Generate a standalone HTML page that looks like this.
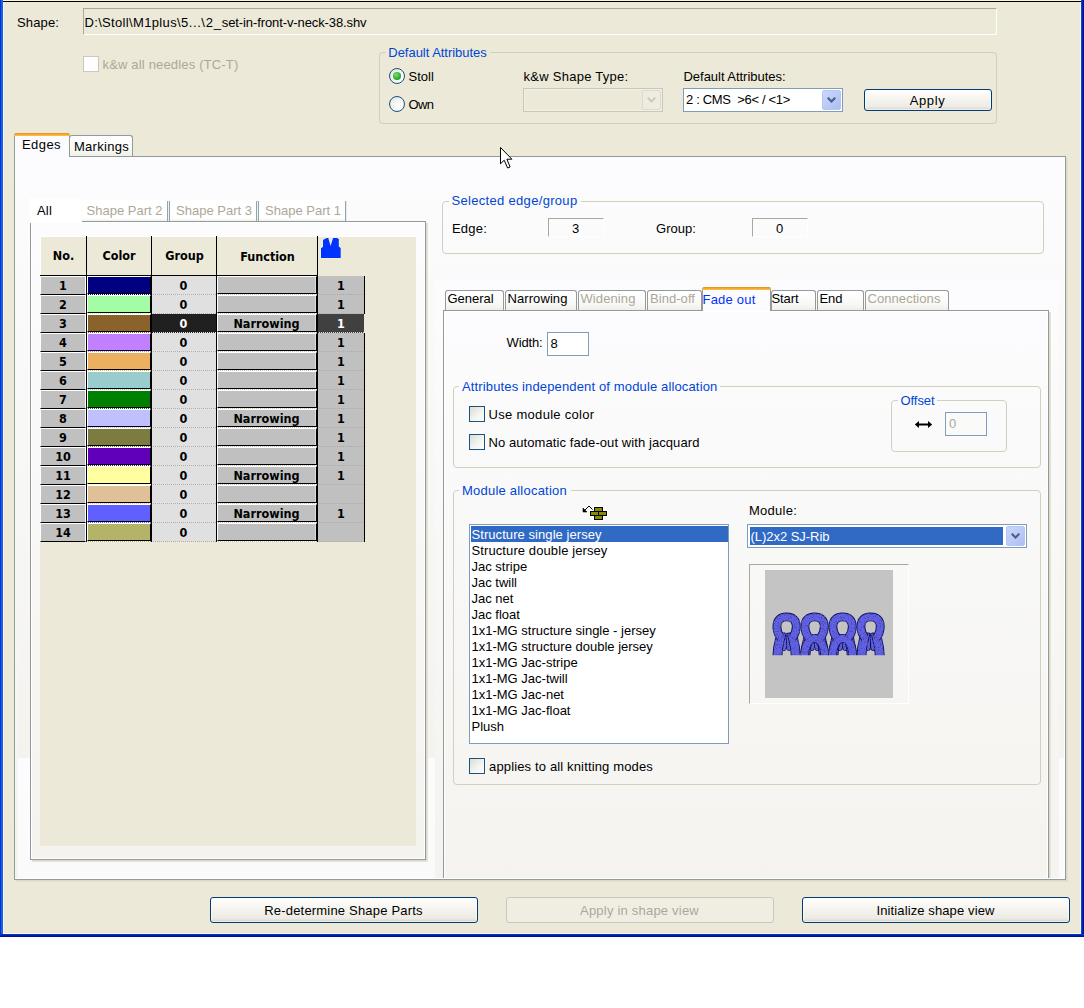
<!DOCTYPE html>
<html><head><meta charset="utf-8"><title>Shape Edges</title>
<style>
html,body{margin:0;padding:0;background:#fff}
body{width:1084px;height:1008px;position:relative;overflow:hidden;font:13px/15px "Liberation Sans",sans-serif;color:#000}
#w div,#w span,#w svg{position:absolute;box-sizing:border-box}
#w span span{position:static}
#w{position:absolute;left:0;top:0;width:1084px;height:937px;background:#ECE9D8;overflow:hidden}
.t{white-space:pre;font:13px/15px "Liberation Sans",sans-serif}
.b{white-space:pre;font:bold 12.5px/15px "DejaVu Sans Condensed","DejaVu Sans",sans-serif;text-align:center}
.gb{border:1px solid #D0D0BF;border-radius:4px}
.btn{border:1px solid #003C74;border-radius:3px;background:linear-gradient(#FFFFFF 0%,#F5F4EE 45%,#ECEBE5 85%,#D6D0C5 100%);box-shadow:inset 0 0 0 1px rgba(255,255,255,.6)}
.tab{border:1px solid #919B9C;border-bottom:none;border-radius:3px 3px 0 0;background:linear-gradient(#FFFFFF,#FAFAF9 55%,#F0F0EA 100%)}
.cb{border:1px solid #1C5180;background:linear-gradient(135deg,#DCDCD7 0%,#F3F3EF 55%,#FFFFFF 100%)}
.rd{border:1px solid #1C5180;border-radius:50%;background:radial-gradient(circle at 65% 65%,#FFFFFF 0%,#F3F3EF 50%,#DCDCD7 100%)}
.grad{background-image:linear-gradient(to bottom,#FCFCFE,#F4F3EE);background-size:100% 599px;background-repeat:repeat-y}
</style></head><body><div id="w">
<div style="left:0px;top:0px;width:1084px;height:1px;background:#FBF5DC"></div>
<div style="left:3px;top:1px;width:1078px;height:1px;background:#000"></div>
<div style="left:0px;top:0px;width:1px;height:937px;background:#0831D9"></div>
<div style="left:1px;top:0px;width:2px;height:937px;background:#1560EA"></div>
<div style="left:3px;top:2px;width:1px;height:932px;background:#FFF8DC"></div>
<div style="left:1080px;top:2px;width:1px;height:932px;background:#FFF8DC"></div>
<div style="left:1081px;top:0px;width:1px;height:937px;background:#0A3FE0"></div>
<div style="left:1082px;top:0px;width:1px;height:937px;background:#0024B8"></div>
<div style="left:1083px;top:0px;width:1px;height:937px;background:#00138C"></div>
<div style="left:3px;top:933px;width:1078px;height:1px;background:#FFF8DC"></div>
<div style="left:0px;top:934px;width:1084px;height:1px;background:#0831D9"></div>
<div style="left:0px;top:935px;width:1084px;height:1px;background:#001EA0"></div>
<div style="left:0px;top:936px;width:1084px;height:1px;background:#00138C"></div>
<span class="t" style="left:17px;top:15px;letter-spacing:0.130px;">Shape:</span>
<div style="left:83px;top:8px;width:914px;height:27px;border:1px solid #ACA899;border-right-color:#fff;border-bottom-color:#fff"></div>
<span class="t" style="left:84.5px;top:15px;"><span style="letter-spacing:0.332px">D:\Stoll\</span><span style="letter-spacing:0.353px">M1plus\</span><span style="letter-spacing:0.559px">5...</span><span style="letter-spacing:0.774px">\2_</span><span style="letter-spacing:-0.100px">set-in-front-v-neck-38.shv</span></span>
<div style="left:83px;top:56px;width:16px;height:16px;border:1px solid #CAC8BB;background:#fff"></div>
<span class="t" style="left:102.5px;top:56.5px;color:#ACA899;letter-spacing:0.172px;">k&amp;w all needles (TC-T)</span>
<div class="gb" style="left:379px;top:52px;width:618px;height:72px;"></div>
<div style="left:386px;top:45px;width:104px;height:14px;background:#ECE9D8"></div>
<span class="t" style="left:388.3px;top:45px;color:#0046D5;letter-spacing:-0.029px;">Default Attributes</span>
<div class="rd" style="left:389px;top:68px;width:16px;height:16px;"><div style="left:3px;top:3px;width:8px;height:8px;border-radius:50%;background:radial-gradient(circle at 40% 35%,#7BE072,#21A121 70%,#1A7E1A)"></div></div>
<div class="rd" style="left:389px;top:96px;width:16px;height:16px;"></div>
<span class="t" style="left:408.5px;top:68.5px;">Stoll</span>
<span class="t" style="left:408.5px;top:96.5px;letter-spacing:-0.578px;">Own</span>
<span class="t" style="left:523.5px;top:68.5px;letter-spacing:0.270px;">k&amp;w Shape Type:</span>
<div style="left:523px;top:88px;width:140px;height:24px;border:1px solid #C9C7BA;background:#ECE9D8;box-shadow:inset 0 0 0 1px #F2F0E6"></div>
<div style="left:642px;top:90px;width:19px;height:20px;border:1px solid #DCDACD;border-radius:2px;background:#EEECE0"></div>
<svg style="left:647px;top:97px" width="9" height="6" viewBox="0 0 9 6"><path d="M0.7 0.7 L4.5 4.5 L8.3 0.7" fill="none" stroke="#C9C7BA" stroke-width="1.8"/></svg>
<span class="t" style="left:683.5px;top:68.5px;letter-spacing:-0.033px;">Default Attributes:</span>
<div style="left:683px;top:88px;width:160px;height:24px;border:1px solid #7F9DB9;background:#fff"></div>
<div style="left:822px;top:90px;width:19px;height:20px;border:1px solid #B7C6F7;border-radius:2px;background:linear-gradient(135deg,#CAD6FB,#B9C8F7 60%,#AEBDF0)"></div>
<svg style="left:827px;top:97px" width="9" height="6" viewBox="0 0 9 6"><path d="M0.7 0.7 L4.5 4.5 L8.3 0.7" fill="none" stroke="#4D6185" stroke-width="2.2"/></svg>
<span class="t" style="left:686px;top:91.5px;letter-spacing:-0.325px;">2 : CMS &nbsp;&gt;6&lt; / &lt;1&gt;</span>
<div class="btn" style="left:864px;top:89px;width:128px;height:22px;"></div>
<span class="t" style="left:909.75px;top:93px;letter-spacing:0.594px;">Apply</span>
<div style="left:14px;top:156px;width:1052px;height:724px;border:1px solid #919B9C;background:linear-gradient(#FCFCFE,#F4F3EE);box-shadow:inset -1px -1px 0 #fff"></div>
<div style="left:1066px;top:158px;width:2px;height:723px;background:linear-gradient(to right,#D9D6C4,#E6E3D1)"></div>
<div style="left:16px;top:880px;width:1052px;height:2px;background:linear-gradient(#D9D6C4,#E6E3D1)"></div>
<div class="grad" style="left:18px;top:159px;width:1046px;height:719px;"></div>
<div class="tab" style="left:69px;top:135px;width:64px;height:21px;"></div>
<span class="t" style="left:74px;top:139px;letter-spacing:0.281px;">Markings</span>
<div style="left:14px;top:133px;width:56px;height:24px;border:1px solid #919B9C;border-bottom:none;border-radius:3px 3px 0 0;background:#FCFCFE"></div>
<div style="left:14px;top:133px;width:56px;height:3px;border-radius:3px 3px 0 0;background:linear-gradient(#E68B2C,#FFC73C)"></div>
<span class="t" style="left:22px;top:137px;letter-spacing:0.425px;">Edges</span>
<div style="left:30px;top:221px;width:396px;height:639px;border:1px solid #919B9C;background:linear-gradient(#FCFCFE,#F4F3EE);box-shadow:inset -1px -1px 0 #fff,inset 1px 1px 0 #fff"></div>
<div style="left:426px;top:223px;width:2px;height:638px;background:linear-gradient(to right,#D9D6C4,#EAE8DC)"></div>
<div style="left:32px;top:860px;width:396px;height:2px;background:linear-gradient(#D9D6C4,#EAE8DC)"></div>
<div style="left:30px;top:198px;width:52px;height:25px;background:#FFFFFF"></div>
<span class="t" style="left:37px;top:203px;letter-spacing:0.182px;">All</span>
<div style="left:82px;top:200px;width:264px;height:21px;background:linear-gradient(#FFFFFF 85%,#F3F2EC)"></div>
<div style="left:167px;top:201px;width:1px;height:20px;background:#8FA5B5"></div>
<div style="left:168px;top:200px;width:1px;height:21px;background:#F5F2E0"></div>
<div style="left:169px;top:201px;width:1px;height:20px;background:#8FA5B5"></div>
<div style="left:256px;top:201px;width:1px;height:20px;background:#8FA5B5"></div>
<div style="left:257px;top:200px;width:1px;height:21px;background:#F5F2E0"></div>
<div style="left:258px;top:201px;width:1px;height:20px;background:#8FA5B5"></div>
<div style="left:345px;top:201px;width:1px;height:20px;background:#8FA5B5"></div>
<div style="left:346px;top:201px;width:1px;height:20px;background:#EDEBDF"></div>
<span class="t" style="left:86.5px;top:203px;color:#ACA899;letter-spacing:0.008px;">Shape Part 2</span>
<span class="t" style="left:176px;top:203px;color:#ACA899;letter-spacing:0.008px;">Shape Part 3</span>
<span class="t" style="left:265px;top:203px;color:#ACA899;letter-spacing:0.008px;">Shape Part 1</span>
<div style="left:40px;top:236px;width:376px;height:610px;background:#ECE9D8;border-top:1px solid #fff"></div>
<div style="left:40px;top:236px;width:1px;height:306px;background:#fff"></div>
<div style="left:86px;top:236px;width:1px;height:306px;background:#000"></div>
<div style="left:151px;top:236px;width:1px;height:306px;background:#000"></div>
<div style="left:216px;top:236px;width:1px;height:306px;background:#000"></div>
<div style="left:317px;top:236px;width:1px;height:306px;background:#000"></div>
<div style="left:40px;top:275px;width:278px;height:1px;background:#000"></div>
<span class="b" style="left:23.5px;top:248px;width:80px;">No.</span>
<span class="b" style="left:79px;top:248px;width:80px;">Color</span>
<span class="b" style="left:144.5px;top:248px;width:80px;">Group</span>
<span class="b" style="left:227.5px;top:249px;width:80px;">Function</span>
<svg style="left:319px;top:236px" width="24" height="24" viewBox="319 236 24 24"><path d="M321 257.9 L321 248.3 L323 246.8 L323 240 L326.6 238 L328.3 238 L330.6 246 L332.1 241 L333.1 238 L336.9 238 L338.8 239.1 L338.8 246.6 L340.7 248 L340.7 257.9 Z" fill="#0033FF" stroke="#FBF3D8" stroke-width="1" paint-order="stroke"/></svg>
<div style="left:40px;top:276px;width:46px;height:19px;background:#C0C0C0;border-top:1px solid #fff;border-left:1px solid #fff;border-bottom:1px solid #000;border-right:1px solid #fff"></div>
<span class="b" style="left:23px;top:278px;width:80px;">1</span>
<div style="left:87px;top:276px;width:64px;height:18px;background:#000080;border-top:1px solid #fff;border-left:1px solid #fff;border-bottom:1px solid #000;border-right:1px solid #000"></div>
<div style="left:87px;top:294px;width:64px;height:1px;background:repeating-linear-gradient(to right,#fff 0 1px,#000080 1px 2px)"></div>
<div style="left:152px;top:276px;width:64px;height:18px;background:#E0E0E0"></div>
<div style="left:152px;top:294px;width:64px;height:1px;background:repeating-linear-gradient(to right,#E0E0E0 0 1px,#B8B49C 1px 2px)"></div>
<span class="b" style="left:143.5px;top:278px;width:80px;">0</span>
<div style="left:217px;top:276px;width:100px;height:18px;background:#C0C0C0;border-top:1px solid #fff;border-left:1px solid #fff;border-bottom:1px solid #000;border-right:1px solid #000;box-shadow:inset -1px 0 0 #DCDCDC"></div>
<div style="left:217px;top:294px;width:100px;height:1px;background:repeating-linear-gradient(to right,#fff 0 1px,#C8C4B0 1px 2px)"></div>
<div style="left:318px;top:276px;width:46px;height:18px;background:#C0C0C0"></div>
<div style="left:364px;top:276px;width:1px;height:19px;background:#000"></div>
<div style="left:318px;top:294px;width:46px;height:1px;background:repeating-linear-gradient(to right,#C0C0C0 0 1px,#B0AC98 1px 2px)"></div>
<span class="b" style="left:301px;top:278px;width:80px;">1</span>
<div style="left:40px;top:295px;width:46px;height:19px;background:#C0C0C0;border-top:1px solid #fff;border-left:1px solid #fff;border-bottom:1px solid #000;border-right:1px solid #fff"></div>
<span class="b" style="left:23px;top:297px;width:80px;">2</span>
<div style="left:87px;top:295px;width:64px;height:18px;background:#A4FCA4;border-top:1px solid #fff;border-left:1px solid #fff;border-bottom:1px solid #000;border-right:1px solid #000"></div>
<div style="left:87px;top:313px;width:64px;height:1px;background:repeating-linear-gradient(to right,#fff 0 1px,#A4FCA4 1px 2px)"></div>
<div style="left:152px;top:295px;width:64px;height:18px;background:#E0E0E0"></div>
<div style="left:152px;top:313px;width:64px;height:1px;background:repeating-linear-gradient(to right,#E0E0E0 0 1px,#B8B49C 1px 2px)"></div>
<span class="b" style="left:143.5px;top:297px;width:80px;">0</span>
<div style="left:217px;top:295px;width:100px;height:18px;background:#C0C0C0;border-top:1px solid #fff;border-left:1px solid #fff;border-bottom:1px solid #000;border-right:1px solid #000;box-shadow:inset -1px 0 0 #DCDCDC"></div>
<div style="left:217px;top:313px;width:100px;height:1px;background:repeating-linear-gradient(to right,#fff 0 1px,#C8C4B0 1px 2px)"></div>
<div style="left:318px;top:295px;width:46px;height:18px;background:#C0C0C0"></div>
<div style="left:364px;top:295px;width:1px;height:19px;background:#000"></div>
<div style="left:318px;top:313px;width:46px;height:1px;background:repeating-linear-gradient(to right,#C0C0C0 0 1px,#B0AC98 1px 2px)"></div>
<span class="b" style="left:301px;top:297px;width:80px;">1</span>
<div style="left:40px;top:314px;width:46px;height:19px;background:#C0C0C0;border-top:1px solid #fff;border-left:1px solid #fff;border-bottom:1px solid #000;border-right:1px solid #fff"></div>
<span class="b" style="left:23px;top:316px;width:80px;">3</span>
<div style="left:87px;top:314px;width:64px;height:18px;background:#8B622C;border-top:1px solid #fff;border-left:1px solid #fff;border-bottom:1px solid #000;border-right:1px solid #000"></div>
<div style="left:87px;top:332px;width:64px;height:1px;background:repeating-linear-gradient(to right,#fff 0 1px,#8B622C 1px 2px)"></div>
<div style="left:152px;top:314px;width:64px;height:18px;background:#202020"></div>
<div style="left:152px;top:332px;width:64px;height:1px;background:repeating-linear-gradient(to right,#202020 0 1px,#E8E8E0 1px 2px)"></div>
<span class="b" style="left:143.5px;top:316px;width:80px;color:#fff;">0</span>
<div style="left:217px;top:314px;width:100px;height:18px;background:#C0C0C0;border-top:1px solid #fff;border-left:1px solid #fff;border-bottom:1px solid #000;border-right:1px solid #000;box-shadow:inset -1px 0 0 #DCDCDC"></div>
<div style="left:217px;top:332px;width:100px;height:1px;background:repeating-linear-gradient(to right,#fff 0 1px,#C8C4B0 1px 2px)"></div>
<span class="b" style="left:226.5px;top:316px;width:80px;">Narrowing</span>
<div style="left:318px;top:314px;width:46px;height:18px;background:#404040"></div>
<div style="left:318px;top:332px;width:46px;height:1px;background:repeating-linear-gradient(to right,#404040 0 1px,#D8D8D0 1px 2px)"></div>
<span class="b" style="left:301px;top:316px;width:80px;color:#fff;">1</span>
<div style="left:40px;top:333px;width:46px;height:19px;background:#C0C0C0;border-top:1px solid #fff;border-left:1px solid #fff;border-bottom:1px solid #000;border-right:1px solid #fff"></div>
<span class="b" style="left:23px;top:335px;width:80px;">4</span>
<div style="left:87px;top:333px;width:64px;height:18px;background:#C080FF;border-top:1px solid #fff;border-left:1px solid #fff;border-bottom:1px solid #000;border-right:1px solid #000"></div>
<div style="left:87px;top:351px;width:64px;height:1px;background:repeating-linear-gradient(to right,#fff 0 1px,#C080FF 1px 2px)"></div>
<div style="left:152px;top:333px;width:64px;height:18px;background:#E0E0E0"></div>
<div style="left:152px;top:351px;width:64px;height:1px;background:repeating-linear-gradient(to right,#E0E0E0 0 1px,#B8B49C 1px 2px)"></div>
<span class="b" style="left:143.5px;top:335px;width:80px;">0</span>
<div style="left:217px;top:333px;width:100px;height:18px;background:#C0C0C0;border-top:1px solid #fff;border-left:1px solid #fff;border-bottom:1px solid #000;border-right:1px solid #000;box-shadow:inset -1px 0 0 #DCDCDC"></div>
<div style="left:217px;top:351px;width:100px;height:1px;background:repeating-linear-gradient(to right,#fff 0 1px,#C8C4B0 1px 2px)"></div>
<div style="left:318px;top:333px;width:46px;height:18px;background:#C0C0C0"></div>
<div style="left:364px;top:333px;width:1px;height:19px;background:#000"></div>
<div style="left:318px;top:351px;width:46px;height:1px;background:repeating-linear-gradient(to right,#C0C0C0 0 1px,#B0AC98 1px 2px)"></div>
<span class="b" style="left:301px;top:335px;width:80px;">1</span>
<div style="left:40px;top:352px;width:46px;height:19px;background:#C0C0C0;border-top:1px solid #fff;border-left:1px solid #fff;border-bottom:1px solid #000;border-right:1px solid #fff"></div>
<span class="b" style="left:23px;top:354px;width:80px;">5</span>
<div style="left:87px;top:352px;width:64px;height:18px;background:#EBB060;border-top:1px solid #fff;border-left:1px solid #fff;border-bottom:1px solid #000;border-right:1px solid #000"></div>
<div style="left:87px;top:370px;width:64px;height:1px;background:repeating-linear-gradient(to right,#fff 0 1px,#EBB060 1px 2px)"></div>
<div style="left:152px;top:352px;width:64px;height:18px;background:#E0E0E0"></div>
<div style="left:152px;top:370px;width:64px;height:1px;background:repeating-linear-gradient(to right,#E0E0E0 0 1px,#B8B49C 1px 2px)"></div>
<span class="b" style="left:143.5px;top:354px;width:80px;">0</span>
<div style="left:217px;top:352px;width:100px;height:18px;background:#C0C0C0;border-top:1px solid #fff;border-left:1px solid #fff;border-bottom:1px solid #000;border-right:1px solid #000;box-shadow:inset -1px 0 0 #DCDCDC"></div>
<div style="left:217px;top:370px;width:100px;height:1px;background:repeating-linear-gradient(to right,#fff 0 1px,#C8C4B0 1px 2px)"></div>
<div style="left:318px;top:352px;width:46px;height:18px;background:#C0C0C0"></div>
<div style="left:364px;top:352px;width:1px;height:19px;background:#000"></div>
<div style="left:318px;top:370px;width:46px;height:1px;background:repeating-linear-gradient(to right,#C0C0C0 0 1px,#B0AC98 1px 2px)"></div>
<span class="b" style="left:301px;top:354px;width:80px;">1</span>
<div style="left:40px;top:371px;width:46px;height:19px;background:#C0C0C0;border-top:1px solid #fff;border-left:1px solid #fff;border-bottom:1px solid #000;border-right:1px solid #fff"></div>
<span class="b" style="left:23px;top:373px;width:80px;">6</span>
<div style="left:87px;top:371px;width:64px;height:18px;background:#99CCCC;border-top:1px solid #fff;border-left:1px solid #fff;border-bottom:1px solid #000;border-right:1px solid #000"></div>
<div style="left:87px;top:389px;width:64px;height:1px;background:repeating-linear-gradient(to right,#fff 0 1px,#99CCCC 1px 2px)"></div>
<div style="left:152px;top:371px;width:64px;height:18px;background:#E0E0E0"></div>
<div style="left:152px;top:389px;width:64px;height:1px;background:repeating-linear-gradient(to right,#E0E0E0 0 1px,#B8B49C 1px 2px)"></div>
<span class="b" style="left:143.5px;top:373px;width:80px;">0</span>
<div style="left:217px;top:371px;width:100px;height:18px;background:#C0C0C0;border-top:1px solid #fff;border-left:1px solid #fff;border-bottom:1px solid #000;border-right:1px solid #000;box-shadow:inset -1px 0 0 #DCDCDC"></div>
<div style="left:217px;top:389px;width:100px;height:1px;background:repeating-linear-gradient(to right,#fff 0 1px,#C8C4B0 1px 2px)"></div>
<div style="left:318px;top:371px;width:46px;height:18px;background:#C0C0C0"></div>
<div style="left:364px;top:371px;width:1px;height:19px;background:#000"></div>
<div style="left:318px;top:389px;width:46px;height:1px;background:repeating-linear-gradient(to right,#C0C0C0 0 1px,#B0AC98 1px 2px)"></div>
<span class="b" style="left:301px;top:373px;width:80px;">1</span>
<div style="left:40px;top:390px;width:46px;height:19px;background:#C0C0C0;border-top:1px solid #fff;border-left:1px solid #fff;border-bottom:1px solid #000;border-right:1px solid #fff"></div>
<span class="b" style="left:23px;top:392px;width:80px;">7</span>
<div style="left:87px;top:390px;width:64px;height:18px;background:#008000;border-top:1px solid #fff;border-left:1px solid #fff;border-bottom:1px solid #000;border-right:1px solid #000"></div>
<div style="left:87px;top:408px;width:64px;height:1px;background:repeating-linear-gradient(to right,#fff 0 1px,#008000 1px 2px)"></div>
<div style="left:152px;top:390px;width:64px;height:18px;background:#E0E0E0"></div>
<div style="left:152px;top:408px;width:64px;height:1px;background:repeating-linear-gradient(to right,#E0E0E0 0 1px,#B8B49C 1px 2px)"></div>
<span class="b" style="left:143.5px;top:392px;width:80px;">0</span>
<div style="left:217px;top:390px;width:100px;height:18px;background:#C0C0C0;border-top:1px solid #fff;border-left:1px solid #fff;border-bottom:1px solid #000;border-right:1px solid #000;box-shadow:inset -1px 0 0 #DCDCDC"></div>
<div style="left:217px;top:408px;width:100px;height:1px;background:repeating-linear-gradient(to right,#fff 0 1px,#C8C4B0 1px 2px)"></div>
<div style="left:318px;top:390px;width:46px;height:18px;background:#C0C0C0"></div>
<div style="left:364px;top:390px;width:1px;height:19px;background:#000"></div>
<div style="left:318px;top:408px;width:46px;height:1px;background:repeating-linear-gradient(to right,#C0C0C0 0 1px,#B0AC98 1px 2px)"></div>
<span class="b" style="left:301px;top:392px;width:80px;">1</span>
<div style="left:40px;top:409px;width:46px;height:19px;background:#C0C0C0;border-top:1px solid #fff;border-left:1px solid #fff;border-bottom:1px solid #000;border-right:1px solid #fff"></div>
<span class="b" style="left:23px;top:411px;width:80px;">8</span>
<div style="left:87px;top:409px;width:64px;height:18px;background:#C0C0FF;border-top:1px solid #fff;border-left:1px solid #fff;border-bottom:1px solid #000;border-right:1px solid #000"></div>
<div style="left:87px;top:427px;width:64px;height:1px;background:repeating-linear-gradient(to right,#fff 0 1px,#C0C0FF 1px 2px)"></div>
<div style="left:152px;top:409px;width:64px;height:18px;background:#E0E0E0"></div>
<div style="left:152px;top:427px;width:64px;height:1px;background:repeating-linear-gradient(to right,#E0E0E0 0 1px,#B8B49C 1px 2px)"></div>
<span class="b" style="left:143.5px;top:411px;width:80px;">0</span>
<div style="left:217px;top:409px;width:100px;height:18px;background:#C0C0C0;border-top:1px solid #fff;border-left:1px solid #fff;border-bottom:1px solid #000;border-right:1px solid #000;box-shadow:inset -1px 0 0 #DCDCDC"></div>
<div style="left:217px;top:427px;width:100px;height:1px;background:repeating-linear-gradient(to right,#fff 0 1px,#C8C4B0 1px 2px)"></div>
<span class="b" style="left:226.5px;top:411px;width:80px;">Narrowing</span>
<div style="left:318px;top:409px;width:46px;height:18px;background:#C0C0C0"></div>
<div style="left:364px;top:409px;width:1px;height:19px;background:#000"></div>
<div style="left:318px;top:427px;width:46px;height:1px;background:repeating-linear-gradient(to right,#C0C0C0 0 1px,#B0AC98 1px 2px)"></div>
<span class="b" style="left:301px;top:411px;width:80px;">1</span>
<div style="left:40px;top:428px;width:46px;height:19px;background:#C0C0C0;border-top:1px solid #fff;border-left:1px solid #fff;border-bottom:1px solid #000;border-right:1px solid #fff"></div>
<span class="b" style="left:23px;top:430px;width:80px;">9</span>
<div style="left:87px;top:428px;width:64px;height:18px;background:#7C7C40;border-top:1px solid #fff;border-left:1px solid #fff;border-bottom:1px solid #000;border-right:1px solid #000"></div>
<div style="left:87px;top:446px;width:64px;height:1px;background:repeating-linear-gradient(to right,#fff 0 1px,#7C7C40 1px 2px)"></div>
<div style="left:152px;top:428px;width:64px;height:18px;background:#E0E0E0"></div>
<div style="left:152px;top:446px;width:64px;height:1px;background:repeating-linear-gradient(to right,#E0E0E0 0 1px,#B8B49C 1px 2px)"></div>
<span class="b" style="left:143.5px;top:430px;width:80px;">0</span>
<div style="left:217px;top:428px;width:100px;height:18px;background:#C0C0C0;border-top:1px solid #fff;border-left:1px solid #fff;border-bottom:1px solid #000;border-right:1px solid #000;box-shadow:inset -1px 0 0 #DCDCDC"></div>
<div style="left:217px;top:446px;width:100px;height:1px;background:repeating-linear-gradient(to right,#fff 0 1px,#C8C4B0 1px 2px)"></div>
<div style="left:318px;top:428px;width:46px;height:18px;background:#C0C0C0"></div>
<div style="left:364px;top:428px;width:1px;height:19px;background:#000"></div>
<div style="left:318px;top:446px;width:46px;height:1px;background:repeating-linear-gradient(to right,#C0C0C0 0 1px,#B0AC98 1px 2px)"></div>
<span class="b" style="left:301px;top:430px;width:80px;">1</span>
<div style="left:40px;top:447px;width:46px;height:19px;background:#C0C0C0;border-top:1px solid #fff;border-left:1px solid #fff;border-bottom:1px solid #000;border-right:1px solid #fff"></div>
<span class="b" style="left:23px;top:449px;width:80px;">10</span>
<div style="left:87px;top:447px;width:64px;height:18px;background:#6000B8;border-top:1px solid #fff;border-left:1px solid #fff;border-bottom:1px solid #000;border-right:1px solid #000"></div>
<div style="left:87px;top:465px;width:64px;height:1px;background:repeating-linear-gradient(to right,#fff 0 1px,#6000B8 1px 2px)"></div>
<div style="left:152px;top:447px;width:64px;height:18px;background:#E0E0E0"></div>
<div style="left:152px;top:465px;width:64px;height:1px;background:repeating-linear-gradient(to right,#E0E0E0 0 1px,#B8B49C 1px 2px)"></div>
<span class="b" style="left:143.5px;top:449px;width:80px;">0</span>
<div style="left:217px;top:447px;width:100px;height:18px;background:#C0C0C0;border-top:1px solid #fff;border-left:1px solid #fff;border-bottom:1px solid #000;border-right:1px solid #000;box-shadow:inset -1px 0 0 #DCDCDC"></div>
<div style="left:217px;top:465px;width:100px;height:1px;background:repeating-linear-gradient(to right,#fff 0 1px,#C8C4B0 1px 2px)"></div>
<div style="left:318px;top:447px;width:46px;height:18px;background:#C0C0C0"></div>
<div style="left:364px;top:447px;width:1px;height:19px;background:#000"></div>
<div style="left:318px;top:465px;width:46px;height:1px;background:repeating-linear-gradient(to right,#C0C0C0 0 1px,#B0AC98 1px 2px)"></div>
<span class="b" style="left:301px;top:449px;width:80px;">1</span>
<div style="left:40px;top:466px;width:46px;height:19px;background:#C0C0C0;border-top:1px solid #fff;border-left:1px solid #fff;border-bottom:1px solid #000;border-right:1px solid #fff"></div>
<span class="b" style="left:23px;top:468px;width:80px;">11</span>
<div style="left:87px;top:466px;width:64px;height:18px;background:#FFFFA0;border-top:1px solid #fff;border-left:1px solid #fff;border-bottom:1px solid #000;border-right:1px solid #000"></div>
<div style="left:87px;top:484px;width:64px;height:1px;background:repeating-linear-gradient(to right,#fff 0 1px,#FFFFA0 1px 2px)"></div>
<div style="left:152px;top:466px;width:64px;height:18px;background:#E0E0E0"></div>
<div style="left:152px;top:484px;width:64px;height:1px;background:repeating-linear-gradient(to right,#E0E0E0 0 1px,#B8B49C 1px 2px)"></div>
<span class="b" style="left:143.5px;top:468px;width:80px;">0</span>
<div style="left:217px;top:466px;width:100px;height:18px;background:#C0C0C0;border-top:1px solid #fff;border-left:1px solid #fff;border-bottom:1px solid #000;border-right:1px solid #000;box-shadow:inset -1px 0 0 #DCDCDC"></div>
<div style="left:217px;top:484px;width:100px;height:1px;background:repeating-linear-gradient(to right,#fff 0 1px,#C8C4B0 1px 2px)"></div>
<span class="b" style="left:226.5px;top:468px;width:80px;">Narrowing</span>
<div style="left:318px;top:466px;width:46px;height:18px;background:#C0C0C0"></div>
<div style="left:364px;top:466px;width:1px;height:19px;background:#000"></div>
<div style="left:318px;top:484px;width:46px;height:1px;background:repeating-linear-gradient(to right,#C0C0C0 0 1px,#B0AC98 1px 2px)"></div>
<span class="b" style="left:301px;top:468px;width:80px;">1</span>
<div style="left:40px;top:485px;width:46px;height:19px;background:#C0C0C0;border-top:1px solid #fff;border-left:1px solid #fff;border-bottom:1px solid #000;border-right:1px solid #fff"></div>
<span class="b" style="left:23px;top:487px;width:80px;">12</span>
<div style="left:87px;top:485px;width:64px;height:18px;background:#E0C098;border-top:1px solid #fff;border-left:1px solid #fff;border-bottom:1px solid #000;border-right:1px solid #000"></div>
<div style="left:87px;top:503px;width:64px;height:1px;background:repeating-linear-gradient(to right,#fff 0 1px,#E0C098 1px 2px)"></div>
<div style="left:152px;top:485px;width:64px;height:18px;background:#E0E0E0"></div>
<div style="left:152px;top:503px;width:64px;height:1px;background:repeating-linear-gradient(to right,#E0E0E0 0 1px,#B8B49C 1px 2px)"></div>
<span class="b" style="left:143.5px;top:487px;width:80px;">0</span>
<div style="left:217px;top:485px;width:100px;height:18px;background:#C0C0C0;border-top:1px solid #fff;border-left:1px solid #fff;border-bottom:1px solid #000;border-right:1px solid #000;box-shadow:inset -1px 0 0 #DCDCDC"></div>
<div style="left:217px;top:503px;width:100px;height:1px;background:repeating-linear-gradient(to right,#fff 0 1px,#C8C4B0 1px 2px)"></div>
<div style="left:318px;top:485px;width:46px;height:18px;background:#C0C0C0"></div>
<div style="left:364px;top:485px;width:1px;height:19px;background:#000"></div>
<div style="left:318px;top:503px;width:46px;height:1px;background:repeating-linear-gradient(to right,#C0C0C0 0 1px,#B0AC98 1px 2px)"></div>
<div style="left:40px;top:504px;width:46px;height:19px;background:#C0C0C0;border-top:1px solid #fff;border-left:1px solid #fff;border-bottom:1px solid #000;border-right:1px solid #fff"></div>
<span class="b" style="left:23px;top:506px;width:80px;">13</span>
<div style="left:87px;top:504px;width:64px;height:18px;background:#6060FF;border-top:1px solid #fff;border-left:1px solid #fff;border-bottom:1px solid #000;border-right:1px solid #000"></div>
<div style="left:87px;top:522px;width:64px;height:1px;background:repeating-linear-gradient(to right,#fff 0 1px,#6060FF 1px 2px)"></div>
<div style="left:152px;top:504px;width:64px;height:18px;background:#E0E0E0"></div>
<div style="left:152px;top:522px;width:64px;height:1px;background:repeating-linear-gradient(to right,#E0E0E0 0 1px,#B8B49C 1px 2px)"></div>
<span class="b" style="left:143.5px;top:506px;width:80px;">0</span>
<div style="left:217px;top:504px;width:100px;height:18px;background:#C0C0C0;border-top:1px solid #fff;border-left:1px solid #fff;border-bottom:1px solid #000;border-right:1px solid #000;box-shadow:inset -1px 0 0 #DCDCDC"></div>
<div style="left:217px;top:522px;width:100px;height:1px;background:repeating-linear-gradient(to right,#fff 0 1px,#C8C4B0 1px 2px)"></div>
<span class="b" style="left:226.5px;top:506px;width:80px;">Narrowing</span>
<div style="left:318px;top:504px;width:46px;height:18px;background:#C0C0C0"></div>
<div style="left:364px;top:504px;width:1px;height:19px;background:#000"></div>
<div style="left:318px;top:522px;width:46px;height:1px;background:repeating-linear-gradient(to right,#C0C0C0 0 1px,#B0AC98 1px 2px)"></div>
<span class="b" style="left:301px;top:506px;width:80px;">1</span>
<div style="left:40px;top:523px;width:46px;height:19px;background:#C0C0C0;border-top:1px solid #fff;border-left:1px solid #fff;border-bottom:1px solid #000;border-right:1px solid #fff"></div>
<span class="b" style="left:23px;top:525px;width:80px;">14</span>
<div style="left:87px;top:523px;width:64px;height:18px;background:#B4B468;border-top:1px solid #fff;border-left:1px solid #fff;border-bottom:1px solid #000;border-right:1px solid #000"></div>
<div style="left:87px;top:541px;width:64px;height:1px;background:repeating-linear-gradient(to right,#fff 0 1px,#B4B468 1px 2px)"></div>
<div style="left:152px;top:523px;width:64px;height:18px;background:#E0E0E0"></div>
<div style="left:152px;top:541px;width:64px;height:1px;background:repeating-linear-gradient(to right,#E0E0E0 0 1px,#B8B49C 1px 2px)"></div>
<span class="b" style="left:143.5px;top:525px;width:80px;">0</span>
<div style="left:217px;top:523px;width:100px;height:18px;background:#C0C0C0;border-top:1px solid #fff;border-left:1px solid #fff;border-bottom:1px solid #000;border-right:1px solid #000;box-shadow:inset -1px 0 0 #DCDCDC"></div>
<div style="left:217px;top:541px;width:100px;height:1px;background:repeating-linear-gradient(to right,#fff 0 1px,#C8C4B0 1px 2px)"></div>
<div style="left:318px;top:523px;width:46px;height:18px;background:#C0C0C0"></div>
<div style="left:364px;top:523px;width:1px;height:19px;background:#000"></div>
<div style="left:318px;top:541px;width:46px;height:1px;background:repeating-linear-gradient(to right,#C0C0C0 0 1px,#B0AC98 1px 2px)"></div>
<div class="grad" style="left:435px;top:279px;width:624px;height:599px;"></div>
<div class="gb" style="left:442px;top:201px;width:602px;height:53px;"></div>
<div style="left:449px;top:194px;width:132px;height:14px;background:#FAFAFA"></div>
<span class="t" style="left:451.5px;top:192.5px;color:#0046D5;letter-spacing:0.314px;">Selected edge/group</span>
<span class="t" style="left:452px;top:220.5px;letter-spacing:0.203px;">Edge:</span>
<span class="t" style="left:656px;top:220.5px;letter-spacing:0.042px;">Group:</span>
<div style="left:548px;top:218px;width:56px;height:19px;border:1px solid #ACA899;border-right-color:#fff;border-bottom-color:#fff"></div>
<span class="t" style="left:571.883px;top:220.5px;">3</span>
<div style="left:752px;top:218px;width:56px;height:19px;border:1px solid #ACA899;border-right-color:#fff;border-bottom-color:#fff"></div>
<span class="t" style="left:775.883px;top:220.5px;">0</span>
<div style="left:443px;top:310px;width:606px;height:568px;border:1px solid #919B9C;border-bottom:none;background:linear-gradient(#FCFCFE,#F4F3EE 105%);box-shadow:inset -1px 0 0 #fff,inset 1px 1px 0 #fff"></div>
<div style="left:1049px;top:312px;width:2px;height:566px;background:linear-gradient(to right,#D9D6C4,#EAE8DC)"></div>
<div class="tab" style="left:445px;top:290px;width:59px;height:20px;"></div>
<span class="t" style="left:447.5px;top:291px;letter-spacing:-0.038px;">General</span>
<div class="tab" style="left:505px;top:290px;width:72px;height:20px;"></div>
<span class="t" style="left:507.5px;top:291px;letter-spacing:0.082px;">Narrowing</span>
<div class="tab" style="left:578px;top:290px;width:68px;height:20px;"></div>
<span class="t" style="left:580.5px;top:291px;color:#ACA899;letter-spacing:0.098px;">Widening</span>
<div class="tab" style="left:647px;top:290px;width:55px;height:20px;"></div>
<span class="t" style="left:650px;top:291px;color:#ACA899;letter-spacing:0.053px;">Bind-off</span>
<div class="tab" style="left:771px;top:290px;width:45px;height:20px;"></div>
<span class="t" style="left:771.5px;top:291px;letter-spacing:-0.091px;">Start</span>
<div class="tab" style="left:817px;top:290px;width:47px;height:20px;"></div>
<span class="t" style="left:819.5px;top:291px;letter-spacing:-0.047px;">End</span>
<div class="tab" style="left:865px;top:290px;width:84px;height:20px;"></div>
<span class="t" style="left:867.5px;top:291px;color:#ACA899;letter-spacing:0.064px;">Connections</span>
<div style="left:702px;top:287px;width:69px;height:24px;border:1px solid #919B9C;border-bottom:none;border-radius:3px 3px 0 0;background:#FCFCFE"></div>
<div style="left:702px;top:287px;width:69px;height:3px;border-radius:3px 3px 0 0;background:linear-gradient(#E68B2C,#FFC73C)"></div>
<span class="t" style="left:702.5px;top:291.5px;color:#0033FF;letter-spacing:0.209px;">Fade out</span>
<span class="t" style="left:506.5px;top:335px;letter-spacing:-0.141px;">Width:</span>
<div style="left:547px;top:332px;width:42px;height:24px;border:1px solid #7F9DB9;background:#fff"></div>
<span class="t" style="left:550.5px;top:335.5px;">8</span>
<div class="gb" style="left:453px;top:386px;width:588px;height:82px;"></div>
<div style="left:459px;top:379px;width:261px;height:14px;background:#FBFBFC"></div>
<span class="t" style="left:462px;top:379px;color:#0046D5;letter-spacing:0.141px;">Attributes independent of module allocation</span>
<div class="cb" style="left:469px;top:406px;width:16px;height:16px;"></div>
<span class="t" style="left:488.5px;top:406.5px;letter-spacing:0.301px;">Use module color</span>
<div class="cb" style="left:469px;top:434px;width:16px;height:16px;"></div>
<span class="t" style="left:488.5px;top:435px;letter-spacing:0.081px;">No automatic fade-out with jacquard</span>
<div class="gb" style="left:891px;top:400px;width:116px;height:52px;"></div>
<div style="left:898px;top:393px;width:39px;height:14px;background:#FBFBFB"></div>
<span class="t" style="left:900.5px;top:392.5px;color:#0046D5;letter-spacing:-0.073px;">Offset</span>
<svg style="left:914px;top:419px" width="20" height="11" viewBox="914 419 20 11"><path d="M914.8 424.5 L919 421 L919 423.6 L928 423.6 L928 421 L932.2 424.5 L928 428 L928 425.4 L919 425.4 L919 428 Z" fill="#000"/></svg>
<div style="left:945px;top:412px;width:42px;height:24px;border:1px solid #7F9DB9;background:#FAFAF9"></div>
<span class="t" style="left:949px;top:416px;color:#ACA899;">0</span>
<div class="gb" style="left:453px;top:490px;width:588px;height:295px;"></div>
<div style="left:459px;top:483px;width:112px;height:14px;background:#F9F9F9"></div>
<span class="t" style="left:462px;top:483px;color:#0046D5;letter-spacing:0.222px;">Module allocation</span>
<svg style="left:581px;top:503px" width="28" height="19" viewBox="581 503 28 19"><g fill="#fff" stroke="#fff" stroke-width="2"><rect x="594" y="507" width="9" height="13"/><rect x="590" y="511" width="17" height="5"/></g><g fill="#8A8A00" stroke="#000" stroke-width="1"><rect x="594.5" y="507.5" width="8" height="4"/><rect x="590.5" y="511.5" width="8" height="4"/><rect x="598.5" y="511.5" width="8" height="4"/><rect x="594.5" y="515.5" width="8" height="4"/></g><path d="M583 508 L583 512 L587 512 Z" fill="#000" stroke="#000" stroke-width="0.6"/><path d="M584.5 510.5 L589 506 L592.5 509.5" fill="none" stroke="#000" stroke-width="1"/></svg>
<div style="left:469px;top:524px;width:260px;height:220px;border:1px solid #7F9DB9;background:#fff"></div>
<div style="left:471px;top:526px;width:257px;height:16px;background:#316AC5"></div>
<span class="t" style="left:471.5px;top:526.5px;color:#fff;letter-spacing:0.068px;">Structure single jersey</span>
<span class="t" style="left:471.5px;top:542.5px;letter-spacing:0.099px;">Structure double jersey</span>
<span class="t" style="left:471.5px;top:558.5px;">Jac stripe</span>
<span class="t" style="left:471.5px;top:574.5px;">Jac twill</span>
<span class="t" style="left:471.5px;top:590.5px;">Jac net</span>
<span class="t" style="left:471.5px;top:606.5px;">Jac float</span>
<span class="t" style="left:471.5px;top:622.5px;">1x1-MG structure single - jersey</span>
<span class="t" style="left:471.5px;top:638.5px;">1x1-MG structure double jersey</span>
<span class="t" style="left:471.5px;top:654.5px;">1x1-MG Jac-stripe</span>
<span class="t" style="left:471.5px;top:670.5px;">1x1-MG Jac-twill</span>
<span class="t" style="left:471.5px;top:686.5px;">1x1-MG Jac-net</span>
<span class="t" style="left:471.5px;top:702.5px;">1x1-MG Jac-float</span>
<span class="t" style="left:471.5px;top:718.5px;">Plush</span>
<div class="cb" style="left:469px;top:758px;width:16px;height:16px;"></div>
<span class="t" style="left:489px;top:759px;letter-spacing:0.147px;">applies to all knitting modes</span>
<span class="t" style="left:749px;top:503px;letter-spacing:0.248px;">Module:</span>
<div style="left:747px;top:524px;width:280px;height:24px;border:1px solid #7F9DB9;background:#fff"></div>
<div style="left:750px;top:527px;width:253px;height:18px;background:#316AC5"></div>
<span class="t" style="left:750.5px;top:529px;color:#fff;letter-spacing:-0.037px;">(L)2x2 SJ-Rib</span>
<div style="left:1006px;top:526px;width:19px;height:20px;border:1px solid #B7C6F7;border-radius:2px;background:linear-gradient(135deg,#CAD6FB,#B9C8F7 60%,#AEBDF0)"></div>
<svg style="left:1011px;top:533px" width="9" height="6" viewBox="0 0 9 6"><path d="M0.7 0.7 L4.5 4.5 L8.3 0.7" fill="none" stroke="#4D6185" stroke-width="2.2"/></svg>
<div style="left:749px;top:564px;width:160px;height:140px;border:1px solid #ACA899;border-right-color:#fff;border-bottom-color:#fff"></div>
<div style="left:765px;top:570px;width:128px;height:128px;background:#C4C4C4"></div>
<svg style="left:765px;top:570px" width="128" height="128" viewBox="765 570 128 128"><defs><clipPath id="kc"><rect x="772" y="610" width="114" height="45.3"/></clipPath><filter id="kn" filterUnits="userSpaceOnUse" x="765" y="600" width="128" height="70"><feTurbulence type="fractalNoise" baseFrequency="0.7" numOctaves="2" seed="3" result="n"/><feColorMatrix in="n" type="matrix" values="0 0 0 0 0.08  0 0 0 0 0.08  0 0 0 0 0.38  0 0 0 -11 4.7" result="sp"/><feComposite in="sp" in2="SourceGraphic" operator="in" result="sp2"/><feMerge><feMergeNode in="SourceGraphic"/><feMergeNode in="sp2"/></feMerge></filter></defs><g clip-path="url(#kc)"><g filter="url(#kn)" fill="none"><path d="M812 643 L811.4 647.6" stroke="#111158" stroke-width="6.9" stroke-linecap="round"/><path d="M812 643 L811.4 647.6" stroke="#6060E6" stroke-width="5.1" stroke-linecap="round"/><path d="M817.2 643 L817.8 647.6" stroke="#111158" stroke-width="6.9" stroke-linecap="round"/><path d="M817.2 643 L817.8 647.6" stroke="#6060E6" stroke-width="5.1" stroke-linecap="round"/><path d="M840 643 L839.4 647.6" stroke="#111158" stroke-width="6.9" stroke-linecap="round"/><path d="M840 643 L839.4 647.6" stroke="#6060E6" stroke-width="5.1" stroke-linecap="round"/><path d="M845.2 643 L845.8 647.6" stroke="#111158" stroke-width="6.9" stroke-linecap="round"/><path d="M845.2 643 L845.8 647.6" stroke="#6060E6" stroke-width="5.1" stroke-linecap="round"/><path d="M784 636 L783.4 647.6" stroke="#111158" stroke-width="6.9" stroke-linecap="round"/><path d="M784 636 L783.4 647.6" stroke="#6060E6" stroke-width="5.1" stroke-linecap="round"/><path d="M789.2 636 L789.8 647.6" stroke="#111158" stroke-width="6.9" stroke-linecap="round"/><path d="M789.2 636 L789.8 647.6" stroke="#6060E6" stroke-width="5.1" stroke-linecap="round"/><path d="M868 636 L867.4 647.6" stroke="#111158" stroke-width="6.9" stroke-linecap="round"/><path d="M868 636 L867.4 647.6" stroke="#6060E6" stroke-width="5.1" stroke-linecap="round"/><path d="M873.2 636 L873.8 647.6" stroke="#111158" stroke-width="6.9" stroke-linecap="round"/><path d="M873.2 636 L873.8 647.6" stroke="#6060E6" stroke-width="5.1" stroke-linecap="round"/><path d="M781.1 634 C780.6 640 777.4 643 777.4 658" stroke="#111158" stroke-width="9.9" stroke-linecap="butt"/><path d="M781.1 634 C780.6 640 777.4 643 777.4 658" stroke="#6060E6" stroke-width="8.1" stroke-linecap="butt"/><path d="M792.1 634 C792.6 640 795.8 643 795.8 658" stroke="#111158" stroke-width="9.9" stroke-linecap="butt"/><path d="M792.1 634 C792.6 640 795.8 643 795.8 658" stroke="#6060E6" stroke-width="8.1" stroke-linecap="butt"/><path d="M809.1 634 C808.6 640 805.4 643 805.4 658" stroke="#111158" stroke-width="9.9" stroke-linecap="butt"/><path d="M809.1 634 C808.6 640 805.4 643 805.4 658" stroke="#6060E6" stroke-width="8.1" stroke-linecap="butt"/><path d="M820.1 634 C820.6 640 823.8 643 823.8 658" stroke="#111158" stroke-width="9.9" stroke-linecap="butt"/><path d="M820.1 634 C820.6 640 823.8 643 823.8 658" stroke="#6060E6" stroke-width="8.1" stroke-linecap="butt"/><path d="M837.1 634 C836.6 640 833.4 643 833.4 658" stroke="#111158" stroke-width="9.9" stroke-linecap="butt"/><path d="M837.1 634 C836.6 640 833.4 643 833.4 658" stroke="#6060E6" stroke-width="8.1" stroke-linecap="butt"/><path d="M848.1 634 C848.6 640 851.8 643 851.8 658" stroke="#111158" stroke-width="9.9" stroke-linecap="butt"/><path d="M848.1 634 C848.6 640 851.8 643 851.8 658" stroke="#6060E6" stroke-width="8.1" stroke-linecap="butt"/><path d="M865.1 634 C864.6 640 861.4 643 861.4 658" stroke="#111158" stroke-width="9.9" stroke-linecap="butt"/><path d="M865.1 634 C864.6 640 861.4 643 861.4 658" stroke="#6060E6" stroke-width="8.1" stroke-linecap="butt"/><path d="M876.1 634 C876.6 640 879.8 643 879.8 658" stroke="#111158" stroke-width="9.9" stroke-linecap="butt"/><path d="M876.1 634 C876.6 640 879.8 643 879.8 658" stroke="#6060E6" stroke-width="8.1" stroke-linecap="butt"/><path d="M804.4 658 C804.4 646 808.6 638.4 814.6 638.4 C820.6 638.4 824.8 646 824.8 658" stroke="#111158" stroke-width="8.9" stroke-linecap="butt"/><path d="M804.4 658 C804.4 646 808.6 638.4 814.6 638.4 C820.6 638.4 824.8 646 824.8 658" stroke="#6060E6" stroke-width="7.1" stroke-linecap="butt"/><path d="M832.4 658 C832.4 646 836.6 638.4 842.6 638.4 C848.6 638.4 852.8 646 852.8 658" stroke="#111158" stroke-width="8.9" stroke-linecap="butt"/><path d="M832.4 658 C832.4 646 836.6 638.4 842.6 638.4 C848.6 638.4 852.8 646 852.8 658" stroke="#6060E6" stroke-width="7.1" stroke-linecap="butt"/><path d="M781 638 C778.6 635 776.9 631 776.9 626.5 C776.9 619.5 781.2 616.9 786.6 616.9 C792 616.9 796.3 619.5 796.3 626.5 C796.3 631 794.6 635 792.2 638" stroke="#111158" stroke-width="8.8" stroke-linecap="butt"/><path d="M781 638 C778.6 635 776.9 631 776.9 626.5 C776.9 619.5 781.2 616.9 786.6 616.9 C792 616.9 796.3 619.5 796.3 626.5 C796.3 631 794.6 635 792.2 638" stroke="#6060E6" stroke-width="7" stroke-linecap="butt"/><path d="M809 638 C806.6 635 804.9 631 804.9 626.5 C804.9 619.5 809.2 616.9 814.6 616.9 C820 616.9 824.3 619.5 824.3 626.5 C824.3 631 822.6 635 820.2 638" stroke="#111158" stroke-width="8.8" stroke-linecap="butt"/><path d="M809 638 C806.6 635 804.9 631 804.9 626.5 C804.9 619.5 809.2 616.9 814.6 616.9 C820 616.9 824.3 619.5 824.3 626.5 C824.3 631 822.6 635 820.2 638" stroke="#6060E6" stroke-width="7" stroke-linecap="butt"/><path d="M837 638 C834.6 635 832.9 631 832.9 626.5 C832.9 619.5 837.2 616.9 842.6 616.9 C848 616.9 852.3 619.5 852.3 626.5 C852.3 631 850.6 635 848.2 638" stroke="#111158" stroke-width="8.8" stroke-linecap="butt"/><path d="M837 638 C834.6 635 832.9 631 832.9 626.5 C832.9 619.5 837.2 616.9 842.6 616.9 C848 616.9 852.3 619.5 852.3 626.5 C852.3 631 850.6 635 848.2 638" stroke="#6060E6" stroke-width="7" stroke-linecap="butt"/><path d="M865 638 C862.6 635 860.9 631 860.9 626.5 C860.9 619.5 865.2 616.9 870.6 616.9 C876 616.9 880.3 619.5 880.3 626.5 C880.3 631 878.6 635 876.2 638" stroke="#111158" stroke-width="8.8" stroke-linecap="butt"/><path d="M865 638 C862.6 635 860.9 631 860.9 626.5 C860.9 619.5 865.2 616.9 870.6 616.9 C876 616.9 880.3 619.5 880.3 626.5 C880.3 631 878.6 635 876.2 638" stroke="#6060E6" stroke-width="7" stroke-linecap="butt"/></g></g></svg>
<div class="btn" style="left:210px;top:897px;width:268px;height:26px;"></div>
<span class="t" style="left:264.25px;top:902.5px;letter-spacing:0.189px;">Re-determine Shape Parts</span>
<div style="left:506px;top:897px;width:268px;height:26px;border:1px solid #C9C7BA;border-radius:3px;background:#F0EEE3"></div>
<span class="t" style="left:580px;top:902.5px;color:#ACA899;letter-spacing:0.214px;">Apply in shape view</span>
<div class="btn" style="left:802px;top:897px;width:268px;height:26px;"></div>
<span class="t" style="left:876.5px;top:902.5px;letter-spacing:0.112px;">Initialize shape view</span>
<svg style="left:499px;top:146px" width="15" height="24" viewBox="-1 -1 15 24"><path d="M0.5 0.5 L0.5 16.8 L4.2 13.2 L7.6 21 L10.1 20 L6.9 12.2 L11.9 12.2 Z" fill="#fff" stroke="#000" stroke-width="1" stroke-linejoin="miter"/></svg>
</div></body></html>
